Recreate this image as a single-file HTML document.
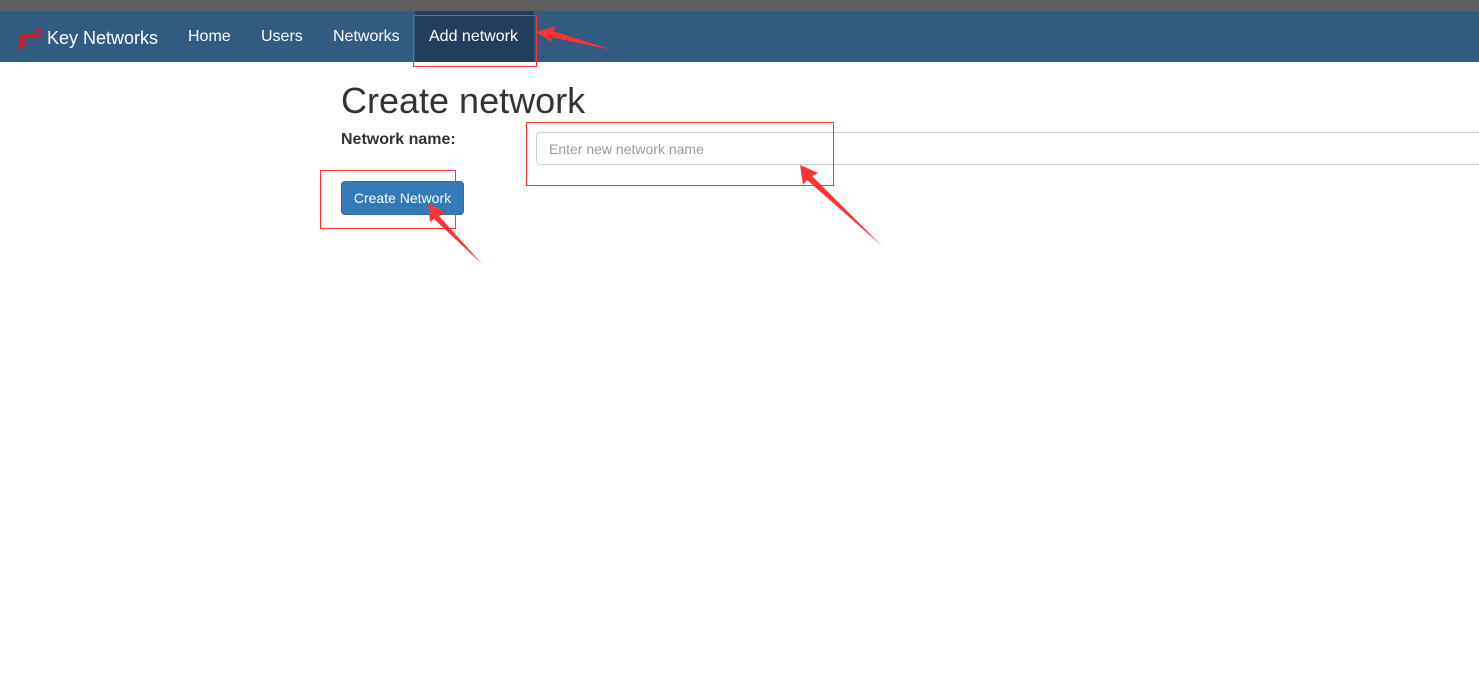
<!DOCTYPE html>
<html><head><style>
body{margin:0;width:1479px;height:693px;background:#fff;font-family:"Liberation Sans",sans-serif;position:relative;overflow:hidden}
.top{position:absolute;left:0;top:0;width:1479px;height:11px;background:#5e5e5e}
.nav{position:absolute;left:0;top:11px;width:1479px;height:51px;background:#325b82}
.nav span{position:absolute;top:17px;color:#fff;font-size:16px}
.act{position:absolute;left:415px;top:11px;width:119px;height:51px;background:#233e5c}
.abs{position:absolute}
</style></head><body>
<div class="top"></div>
<div class="nav">
<div class="act" style="top:0"></div>
<svg class="abs" style="left:16px;top:17px" width="28" height="22"><path d="M3 8h16M17 8v0" stroke="#e0141b" stroke-width="3" fill="none"/><circle cx="22" cy="5" r="3" stroke="#e0141b" stroke-width="2" fill="none"/><path d="M4 8v13M5 15l4-4M5 15l4 5" stroke="#e0141b" stroke-width="2.5" fill="none"/></svg>
<span style="left:47px;font-size:18px;top:17px">Key Networks</span>
<span style="left:188px">Home</span>
<span style="left:261px">Users</span>
<span style="left:333px">Networks</span>
<span style="left:429px">Add network</span>
</div>
<div class="abs" style="left:413px;top:15px;width:122px;height:50px;border:1px solid #f33"></div>
<div class="abs" style="left:341px;top:80px;font-size:36px;color:#333">Create network</div>
<div class="abs" style="left:341px;top:131px;font-size:16px;font-weight:bold;color:#333">Network name:</div>
<div class="abs" style="left:536px;top:132px;width:960px;height:33px;border:1px solid #ccc;border-radius:4px;box-sizing:border-box"></div>
<div class="abs" style="left:549px;top:141px;font-size:14px;color:#999">Enter new network name</div>
<div class="abs" style="left:341px;top:181px;width:123px;height:34px;background:#337ab7;border:1px solid #2e6da4;border-radius:4px;box-sizing:border-box;color:#fff;font-size:14px;text-align:center;line-height:32px">Create Network</div>
<div class="abs" style="left:526px;top:122px;width:306px;height:62px;border:1px solid #f33"></div>
<div class="abs" style="left:320px;top:170px;width:134px;height:57px;border:1px solid #f33"></div>
<svg class="abs" style="left:0;top:0" width="1479" height="693">
<polygon points="536,32 556,26 553,31 612,50 551,37 552,42" fill="#f33"/>
<polygon points="800,165 818,173 812,176 882,246 807,180 803,185" fill="#f33"/>
<polygon points="428,203 445,213 439,216 482,264 434,219 430,222" fill="#f33"/>
</svg>
</body></html>
